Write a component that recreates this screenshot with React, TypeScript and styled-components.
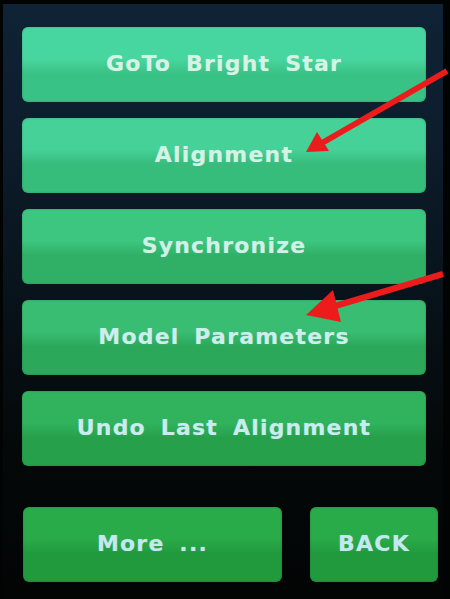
import React from "react";
import styled, { createGlobalStyle } from "styled-components";

const Global = createGlobalStyle`
  html, body { margin: 0; padding: 0; background: #030505; }
  #root { width: 450px; height: 599px; }
`;

const Screen = styled.div`
  position: relative;
  width: 450px;
  height: 599px;
  background: #020303;
  padding: 4px 7px 0 3px;
  box-sizing: border-box;
  overflow: hidden;
`;

const Panel = styled.div`
  height: 100%;
  background: linear-gradient(180deg, #0f2336 0%, #0c1c2a 25%, #08121a 50%, #040808 75%, #030505 100%);
  padding: 23px 0 0 19px;
  box-sizing: border-box;
  display: flex;
  flex-direction: column;
`;

const Stack = styled.div`
  display: flex;
  flex-direction: column;
  gap: 16px;
  width: 404px;
`;

const Row = styled.div`
  display: flex;
  gap: 28px;
  margin-top: 41px;
  padding-left: 1px;
`;

const Btn = styled.div<{ $top: string; $bot: string; $fg: string; $w?: number }>`
  width: ${(p) => (p.$w ? `${p.$w}px` : "100%")};
  height: 75px;
  padding-bottom: 3px;
  box-sizing: border-box;
  border-radius: 6px;
  background: linear-gradient(180deg, ${(p) => p.$top} 0%, ${(p) => p.$top} 42%, ${(p) => p.$bot} 62%, ${(p) => p.$bot} 100%);
  box-shadow: inset 0 0 2px rgba(0, 0, 0, 0.25);
  display: flex;
  align-items: center;
  justify-content: center;
  color: ${(p) => p.$fg};
  font-family: "DejaVu Sans", Verdana, sans-serif;
  font-weight: bold;
  font-size: 22px;
  letter-spacing: 1.2px;
  word-spacing: 6px;
  text-shadow: 0 0 1px rgba(255, 255, 255, 0.3);
`;

const Overlay = styled.svg`
  position: absolute;
  left: 0;
  top: 0;
  pointer-events: none;
`;

const items = [
  { label: "GoTo Bright Star", top: "#48d6a0", bot: "#39c285", fg: "#d6f3e6" },
  { label: "Alignment", top: "#45d198", bot: "#36bc7b", fg: "#d4f2e6" },
  { label: "Synchronize", top: "#3dc680", bot: "#2fb066", fg: "#d0f0e8" },
  { label: "Model Parameters", top: "#38bd72", bot: "#2ba85a", fg: "#cdeeee" },
  { label: "Undo Last Alignment", top: "#31b35e", bot: "#27a04b", fg: "#c8ecf0" },
];

export default function App() {
  return (
    <Screen>
      <Global />
      <Panel>
        <Stack>
          {items.map((it) => (
            <Btn key={it.label} $top={it.top} $bot={it.bot} $fg={it.fg}>
              {it.label}
            </Btn>
          ))}
        </Stack>
        <Row>
          <Btn $top="#2aab4a" $bot="#219a3e" $fg="#c4e8f2" $w={259}>
            More ...
          </Btn>
          <Btn $top="#2aab4a" $bot="#219a3e" $fg="#c4e8f2" $w={128}>
            BACK
          </Btn>
        </Row>
      </Panel>
      <Overlay width="450" height="599" viewBox="0 0 450 599">
        <g stroke="#ec1c1c" strokeWidth="6" strokeLinecap="butt">
          <line x1="447" y1="71" x2="322" y2="143" />
          <line x1="443" y1="274" x2="325" y2="309" />
        </g>
        <g fill="#ec1c1c">
          <polygon points="306,152 317,132 329,151" />
          <polygon points="306,315 333,290 341,322" />
        </g>
      </Overlay>
    </Screen>
  );
}
